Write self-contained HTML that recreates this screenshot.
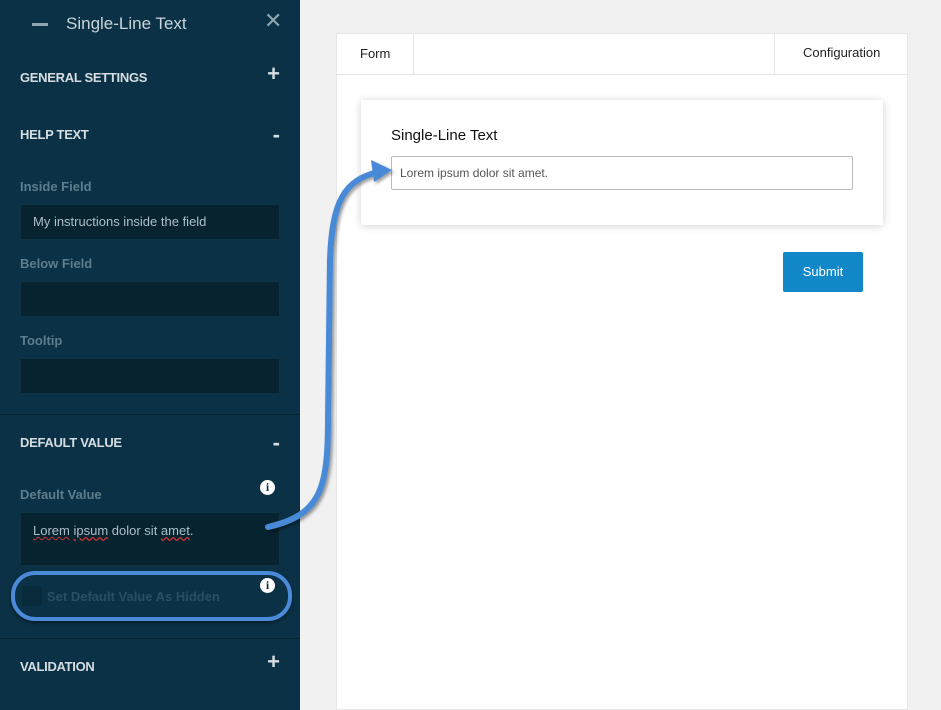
<!DOCTYPE html>
<html><head><style>
body{margin:0;width:941px;height:710px;overflow:hidden;background:#f0f1f0;font-family:"Liberation Sans",sans-serif;position:relative}
.sb{position:absolute;left:0;top:0;width:300px;height:710px;background:#0a3145;color:#c9d4da}
.a{position:absolute}
.h{font-size:13px;font-weight:bold;color:#d6dde1;left:20px;letter-spacing:-0.3px}
.l{font-size:13px;font-weight:bold;color:#5f7e8d;left:20px}
.in{position:absolute;left:20px;width:260px;height:36px;background:#06232f;border:1px solid #0e3345;border-radius:2px;font-size:13px;color:#aebfc8;box-sizing:border-box;padding:9px 12px}
.pl{font-size:22px;color:#d6dde1;right:20px;font-weight:bold}
.hr{position:absolute;left:0;width:300px;height:1px;background:#062330}
.info{position:absolute;width:15px;height:15px;border-radius:50%;background:#fff;color:#0a3145;font:bold 12px "Liberation Serif",serif;text-align:center;line-height:15px}
</style></head><body>
<div class="sb">
<div class="a" style="left:32px;top:23px;width:16px;height:3px;background:#8fa6b2"></div>
<div class="a" style="left:66px;top:14px;font-size:17px;color:#c9d4da">Single-Line Text</div>
<div class="a" style="left:264px;top:8px;font-size:22px;color:#8fa6b2">✕</div>
<div class="a h" style="top:70px">GENERAL SETTINGS</div><div class="a pl" style="top:61px">+</div>
<div class="a h" style="top:127px">HELP TEXT</div><div class="a pl" style="top:122px">-</div>
<div class="a l" style="top:179px">Inside Field</div>
<div class="in" style="top:204px">My instructions inside the field</div>
<div class="a l" style="top:256px">Below Field</div>
<div class="in" style="top:281px"></div>
<div class="a l" style="top:333px">Tooltip</div>
<div class="in" style="top:358px"></div>
<div class="hr" style="top:414px"></div>
<div class="a h" style="top:435px">DEFAULT VALUE</div><div class="a pl" style="top:430px">-</div>
<div class="a l" style="top:487px">Default Value</div>
<div class="info" style="left:260px;top:480px">i</div>
<div class="in" style="top:512px;height:54px;padding-top:10px"><span style="text-decoration:underline wavy #c33;text-decoration-thickness:1px">Lorem</span> <span style="text-decoration:underline wavy #c33">ipsum</span> dolor sit <span style="text-decoration:underline wavy #c33">amet</span>.</div>
<div class="a" style="left:22px;top:586px;width:20px;height:20px;background:#082a3a;border-radius:2px"></div>
<div class="a" style="left:47px;top:589px;font-size:13px;font-weight:bold;color:#2c4f60">Set Default Value As Hidden</div>
<div class="info" style="left:260px;top:578px">i</div>
<div class="a" style="left:11px;top:571px;width:273px;height:42px;border:4px solid #4a8ad8;border-radius:24px;box-shadow:0 2px 3px rgba(0,0,0,.4)"></div>
<div class="hr" style="top:638px"></div>
<div class="a h" style="top:659px">VALIDATION</div><div class="a pl" style="top:649px">+</div>
</div>
<div class="a" style="left:336px;top:33px;width:572px;height:677px;background:#fff;border:1px solid #e6e8e8;box-sizing:border-box"></div>
<div class="a" style="left:336px;top:74px;width:572px;height:1px;background:#e4e6e6"></div>
<div class="a" style="left:413px;top:33px;width:1px;height:41px;background:#e4e6e6"></div>
<div class="a" style="left:774px;top:33px;width:1px;height:41px;background:#e4e6e6"></div>
<div class="a" style="left:360px;top:46px;font-size:13px;color:#222">Form</div>
<div class="a" style="left:803px;top:45px;font-size:13px;color:#222">Configuration</div>
<div class="a" style="left:361px;top:100px;width:522px;height:125px;background:#fff;box-shadow:0 1px 8px rgba(0,0,0,.18)"></div>
<div class="a" style="left:391px;top:127px;font-size:15px;color:#111">Single-Line Text</div>
<div class="a" style="left:391px;top:156px;width:462px;height:34px;border:1px solid #bbb;border-radius:2px;box-sizing:border-box;padding:9px 8px;font-size:12px;color:#555">Lorem ipsum dolor sit amet.</div>
<div class="a" style="left:783px;top:252px;width:80px;height:40px;background:#1388c8;border-radius:2px;color:#fff;font-size:13px;text-align:center;line-height:40px">Submit</div>
<svg class="a" style="left:0;top:0" width="941" height="710"><defs><filter id="s"><feDropShadow dx="2" dy="2" stdDeviation="1.5" flood-opacity=".4"/></filter></defs>
<g filter="url(#s)"><path d="M268 527 C320 515 328 490 328 420 L330 260 C332 200 345 180 378 172" fill="none" stroke="#4a8ad8" stroke-width="6" stroke-linecap="round"/>
<path d="M371 160 L392 170 L374 182 Z" fill="#4a8ad8"/></g></svg>
</body></html>
